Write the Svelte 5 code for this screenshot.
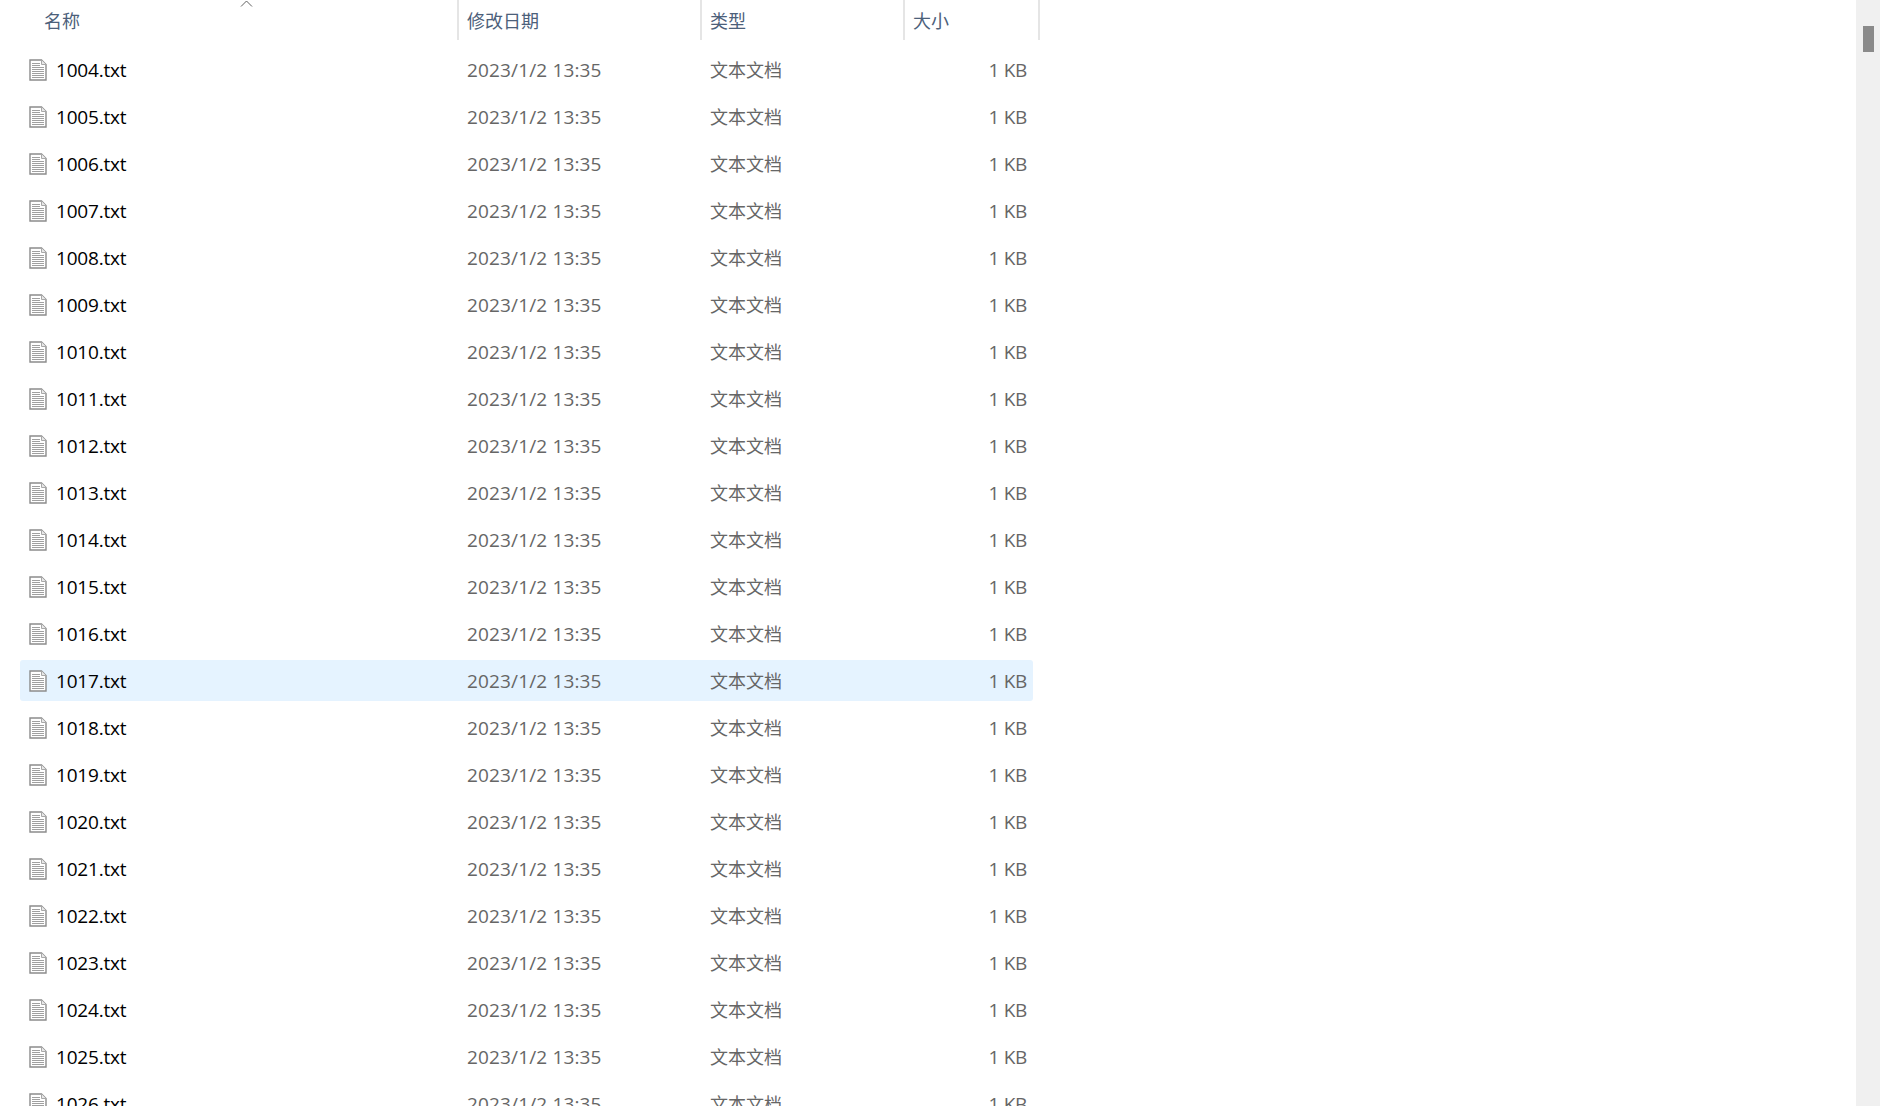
<script>
    // file rows shown in the list, 1004.txt to 1026.txt
    let files = [];
    for (let i = 1004; i <= 1026; i++) {
        files.push({ name: i + ".txt", date: "2023/1/2 13:35", type: "文本文档", size: "1 KB" });
    }
    let hovered = "1017.txt";
    let columns = [
        { label: "名称", cls: "col-name" },
        { label: "修改日期", cls: "col-date" },
        { label: "类型", cls: "col-type" },
        { label: "大小", cls: "col-size" }
    ];
</script>

<div class="window">
    <div class="main">
        <div class="header">
            {#each columns as column}
                <div class="head-cell {column.cls}">{column.label}</div>
            {/each}
            <svg class="sort" width="13" height="7" viewBox="0 0 13 7"><path d="M1 6.5 L6.5 1 L12 6.5" fill="none" stroke="#606060" stroke-width="1"/></svg>
        </div>
        <div class="list">
            {#each files as file}
                <div class="row" class:active={file.name === hovered}>
                    <div class="name">
                        <svg class="icon" width="18" height="22" viewBox="0 0 18 22">
                            <path d="M1 1H12.5L17 5.5V21H1Z" fill="#fff" stroke="#8c8c8c" stroke-width="1.4"/>
                            <path d="M12.5 1V5.5H17" fill="#e8e8e8" stroke="#a8a8a8"/>
                            <path d="M3 4.5H11M3 6.5H11M3 8.5H15M3 10.5H15M3 12.5H15M3 14.5H15M3 16.5H15M3 18.5H15" stroke="#a0a0a0" fill="none"/>
                        </svg>
                        <span>{file.name}</span>
                    </div>
                    <div class="date">{file.date}</div>
                    <div class="type">{file.type}</div>
                    <div class="size">{file.size}</div>
                </div>
            {/each}
        </div>
    </div>
    <div class="scrollbar">
        <div class="thumb"></div>
    </div>
</div>

<style>
    :global(body) {
        background: #fff;
    }
    .window {
        display: flex;
        height: 1106px;
        overflow: hidden;
        font-family: "Open Sans", "Noto Sans CJK SC", sans-serif;
        background: #fff;
    }
    .main {
        flex: 1;
        overflow: hidden;
    }
    .header {
        position: relative;
        display: flex;
        height: 40px;
        width: 1040px;
    }
    .head-cell {
        box-sizing: border-box;
        font-family: "Noto Sans CJK SC", sans-serif;
        font-size: 18px;
        line-height: 40px;
        color: #4c607a;
        border-right: 2px solid #e5e5e5;
        padding-left: 8px;
    }
    .col-name {
        width: 459px;
        padding-left: 44px;
    }
    .col-date {
        width: 243px;
    }
    .col-type {
        width: 203px;
    }
    .col-size {
        width: 135px;
    }
    .sort {
        position: absolute;
        left: 240px;
        top: 0;
    }
    .list {
        display: flex;
        flex-direction: column;
        gap: 6px;
        margin: 9px 0 0 20px;
        width: 1013px;
    }
    .row {
        display: flex;
        flex: none;
        align-items: center;
        height: 41px;
        border-radius: 3px;
        font-size: 19px;
        color: #666;
    }
    .row.active {
        background: #e5f3ff;
    }
    .name {
        display: flex;
        align-items: center;
        gap: 9px;
        width: 447px;
        padding-left: 9px;
        box-sizing: border-box;
        color: #000;
        letter-spacing: -0.2px;
    }
    .date {
        width: 243px;
        letter-spacing: 0.15px;
    }
    .type {
        width: 203px;
        font-family: "Noto Sans CJK SC", sans-serif;
        font-size: 18px;
        padding-bottom: 2px;
    }
    .size {
        flex: 1;
        text-align: right;
        padding-right: 6px;
        letter-spacing: -0.3px;
    }
    .scrollbar {
        flex: none;
        width: 24px;
        background: #f0f0f0;
        padding: 26px 6px 0 7px;
        box-sizing: border-box;
    }
    .thumb {
        height: 26px;
        background: #8a8a8a;
    }
</style>
